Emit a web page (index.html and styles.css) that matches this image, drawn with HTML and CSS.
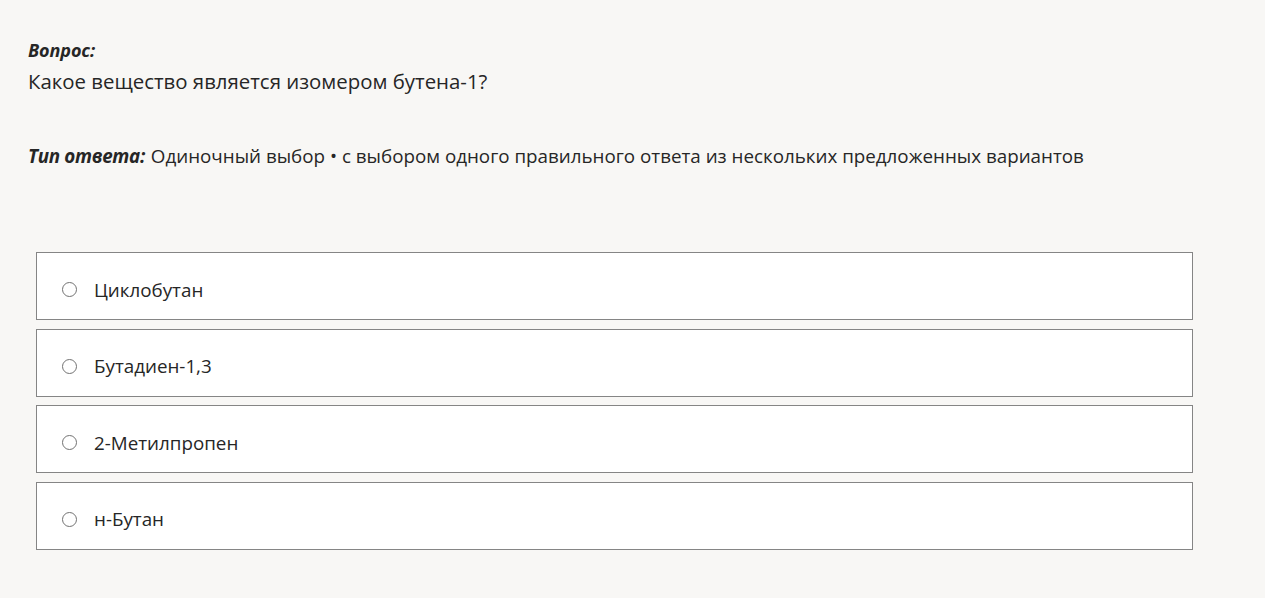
FILE: index.html
```html
<!DOCTYPE html>
<html lang="ru">
<head>
<meta charset="utf-8">
<link rel="stylesheet" href="styles.css">
</head>
<body>
<div class="page">
  <div class="question">
    <div class="label">Вопрос:</div>
    <div class="text">Какое вещество является изомером бутена-1?</div>
  </div>
  <div class="type"><span class="label">Тип ответа:</span> Одиночный выбор • с выбором одного правильного ответа из нескольких предложенных вариантов</div>
  <div class="options">
    <label class="option"><span class="radio"></span><span>Циклобутан</span></label>
    <label class="option"><span class="radio"></span><span>Бутадиен-1,3</span></label>
    <label class="option"><span class="radio"></span><span>2-Метилпропен</span></label>
    <label class="option"><span class="radio"></span><span>н-Бутан</span></label>
  </div>
</div>
</body>
</html>
```
FILE: styles.css
```css
html, body {
  margin: 0;
  padding: 0;
  background: #f8f7f5;
}
body {
  font-family: "Open Sans", "Noto Sans", sans-serif;
  color: #262626;
}
.page {
  padding: 38px 0 0 28px;
}
.question .label {
  font-weight: 700;
  font-style: italic;
  font-size: 18px;
  line-height: 24px;
  letter-spacing: -0.1px;
}
.question .text {
  margin-top: 4px;
  font-size: 20.4px;
  line-height: 30px;
}
.type {
  margin-top: 48px;
  font-size: 18.8px;
  line-height: 24px;
}
.type .label {
  font-weight: 700;
  font-style: italic;
  letter-spacing: -0.3px;
  margin-right: 1px;
}
.options {
  margin: 84px 0 0 8px;
  width: 1157px;
  display: flex;
  flex-direction: column;
  gap: 8.67px;
}
.option {
  box-sizing: border-box;
  display: flex;
  align-items: center;
  height: 68px;
  background: #fff;
  border: 1px solid #858585;
  padding: 7px 0 0 25px;
  font-size: 18.8px;
}
.radio {
  box-sizing: border-box;
  width: 15px;
  height: 15px;
  border: 1px solid #727272;
  border-radius: 50%;
  margin-right: 17px;
}
```
